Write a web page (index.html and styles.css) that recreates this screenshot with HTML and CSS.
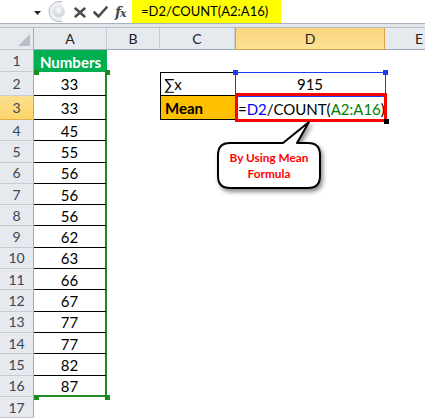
FILE: index.html
```html
<!DOCTYPE html>
<html>
<head>
<meta charset="utf-8">
<link rel="stylesheet" href="styles.css">
</head>
<body>
<div class="fbar">
  <div class="namebox">
    <svg class="dd" width="7" height="4" viewBox="0 0 7 4"><path d="M0 0H7L3.5 4Z" fill="#222"/></svg>
  </div>
  <div class="grip">
    <svg width="22" height="23" viewBox="0 0 22 23">
      <defs>
        <radialGradient id="g1" cx="0.45" cy="0.35" r="0.7">
          <stop offset="0" stop-color="#fafbfc"/>
          <stop offset="1" stop-color="#c9ced6"/>
        </radialGradient>
      </defs>
      <path d="M14 1.5 H11 A10 10 0 0 0 11 21.5 H14" fill="#eef0f3" stroke="#b3bac4" stroke-width="1"/>
      <circle cx="11" cy="11.5" r="5.5" fill="url(#g1)" stroke="#d0d5dc" stroke-width="0.6"/>
    </svg>
  </div>
  <div class="btns">
    <svg width="12" height="11" viewBox="0 0 12 11"><path d="M1.5 1.5L10.5 9.5M10.5 1.5L1.5 9.5" stroke="#4a4a4a" stroke-width="2.4" stroke-linecap="round"/></svg>
    <svg width="15" height="12" viewBox="0 0 15 12"><path d="M1.5 6.5L5.5 10.5L13.5 1.5" fill="none" stroke="#4a4a4a" stroke-width="2.6" stroke-linejoin="round" stroke-linecap="round"/></svg>
    <span class="fx">f<span class="x">x</span></span>
  </div>
  <div class="formula">=D2/COUNT(A2:A16)</div>
</div>
<div class="strip"></div>

<div class="sheet">
  <div class="row hdr">
    <div class="rh corner"><svg width="12" height="12" viewBox="0 0 12 12"><path d="M12 0V12H0Z" fill="#b9bfc8"/></svg></div>
    <div class="ch ca">A</div>
    <div class="ch cb">B</div>
    <div class="ch cc">C</div>
    <div class="ch cd sel">D</div>
    <div class="ch ce">E</div>
  </div>

  <div class="row r1">
    <div class="rh">1</div>
    <div class="ca acell top">Numbers</div>
  </div>
  <div class="row r2">
    <div class="rh">2</div>
    <div class="ca acell">33</div>
    <div class="cb"></div>
    <div class="cc tcell c2">&sum;x</div>
    <div class="cd dcell">915</div>
  </div>
  <div class="row r2">
    <div class="rh selrow">3</div>
    <div class="ca acell">33</div>
    <div class="cb"></div>
    <div class="cc tcell c3">Mean</div>
    <div class="cd dcell d3"><span class="k">=</span><span class="ref1">D2</span><span class="k">/COUNT(</span><span class="ref2">A2:A16</span><span class="k">)</span></div>
  </div>
  <div class="row rn"><div class="rh">4</div><div class="ca acell">45</div></div>
  <div class="row rn"><div class="rh">5</div><div class="ca acell">55</div></div>
  <div class="row rn"><div class="rh">6</div><div class="ca acell">56</div></div>
  <div class="row rn"><div class="rh">7</div><div class="ca acell">56</div></div>
  <div class="row rn"><div class="rh">8</div><div class="ca acell">56</div></div>
  <div class="row rn"><div class="rh">9</div><div class="ca acell">62</div></div>
  <div class="row rn"><div class="rh">10</div><div class="ca acell">63</div></div>
  <div class="row rn"><div class="rh">11</div><div class="ca acell">66</div></div>
  <div class="row rn"><div class="rh">12</div><div class="ca acell">67</div></div>
  <div class="row rn"><div class="rh">13</div><div class="ca acell">77</div></div>
  <div class="row rn"><div class="rh">14</div><div class="ca acell">77</div></div>
  <div class="row rn"><div class="rh">15</div><div class="ca acell">82</div></div>
  <div class="row rn"><div class="rh">16</div><div class="ca acell last">87</div></div>
  <div class="row rn"><div class="rh">17</div></div>

  <div class="bluebox"></div>
  <div class="hd blue hd-b1"></div>
  <div class="hd blue hd-b2"></div>
  <div class="redbox"></div>
  <div class="hd black hd-k"></div>
  <div class="hd green hd-g1"></div>
  <div class="hd green hd-g2"></div>
  <div class="hd green hd-g3"></div>
  <div class="hd green hd-g4"></div>

  <div class="callout">
    <svg width="120" height="80" viewBox="0 0 120 80">
      <path d="M15 22 L68 22 L94 1 L82 22 L93 22 Q105 22 105 34 L105 55 Q105 67 93 67 L15 67 Q3 67 3 55 L3 34 Q3 22 15 22 Z" fill="#fff" stroke="#000" stroke-width="2" stroke-linejoin="round"/>
    </svg>
    <div class="ctext">By Using Mean<br>Formula</div>
  </div>
</div>
</body>
</html>
```
FILE: styles.css
```css
* { box-sizing: border-box; }
html, body { margin: 0; padding: 0; background: #fff; }
body {
  width: 425px;
  height: 420px;
  overflow: hidden;
  font-family: Lato, "Liberation Sans", sans-serif;
  color: #000;
}

/* formula bar */
.fbar {
  display: flex;
  height: 24px;
  background: #fff;
  border-bottom: 1px solid #a7b2bf;
}
.namebox {
  width: 48px;
  display: flex;
  align-items: center;
  justify-content: flex-end;
  padding-right: 7px;
  padding-top: 2px;
}
.grip { width: 22px; display: flex; align-items: center; }
.btns {
  width: 62px;
  display: flex;
  align-items: center;
  gap: 7px;
  padding-left: 4px;
  padding-top: 1px;
}
.fx {
  font-family: "DejaVu Serif", "Liberation Serif", serif;
  font-style: italic;
  font-weight: bold;
  font-size: 14px;
  color: #4a4a4a;
  letter-spacing: -1px;
}
.fx .x { font-size: 11px; }
.formula {
  width: 149px;
  background: #ffff00;
  font-size: 13px;
  padding-left: 9px;
  line-height: 23px;
  white-space: nowrap;
}
.strip {
  height: 4px;
  background: #e3e7ec;
  border-bottom: 1px solid #b4bdc8;
}

/* sheet */
.sheet { position: relative; }
.row { display: flex; height: 21.3px; }
.row.hdr { height: 22px; }
.row.r1 { height: 22px; }
.row.r2 { height: 24px; }

.rh {
  width: 34px;
  flex: none;
  background: #e6e9ee;
  border-right: 1px solid #9eaabb;
  border-bottom: 1px solid #c5ccd6;
  color: #3b4656;
  font-size: 14px;
  display: flex;
  align-items: center;
  justify-content: center;
}
.rh.corner { align-items: flex-end; justify-content: flex-end; padding: 0 3px 3px 0; }
.rh.selrow {
  background: linear-gradient(#fde08d, #fbd56a);
  border-bottom-color: #e2b04a;
}
.ca { width: 73px; flex: none; }
.cb { width: 53px; flex: none; }
.cc { width: 75px; flex: none; }
.cd { width: 150px; flex: none; }
.ce { flex: 1; }

.ch {
  background: #e6e9ee;
  border-right: 1px solid #c5ccd6;
  border-bottom: 1px solid #9eaabb;
  font-size: 14px;
  color: #222;
  display: flex;
  align-items: center;
  justify-content: center;
}
.ch.sel {
  background: linear-gradient(#f8d47c, #fde495);
  border: 1px solid #d9a441;
  border-top: none;
}
.ch.ce { justify-content: flex-start; padding-left: 30px; border-right: none; }

.acell {
  display: flex;
  align-items: center;
  justify-content: center;
  font-size: 15px;
  border-bottom: 1px solid #000;
  border-right: 2px solid #1e8a1e;
  padding-top: 1px;
}
.acell.top {
  background: #00b050;
  color: #fff;
  font-weight: bold;
  border-bottom: none;
  border-right: none;
  width: 73px;
}
.acell.last { border-bottom: 2px solid #1e8a1e; }

.tcell {
  font-size: 15px;
  display: flex;
  align-items: center;
  padding-left: 3px;
  border-left: 1px solid #000;
  border-bottom: 1px solid #000;
}
.c2 { border-top: 1px solid #000; }
.c3 { background: #ffc000; font-weight: bold; padding-left: 4px; }
.dcell {
  font-size: 15px;
  display: flex;
  align-items: center;
  justify-content: center;
  white-space: nowrap;
}
.d3 { justify-content: flex-start; padding-left: 3px; padding-top: 1px; }
.ref1 { color: #0000ff; }
.ref2 { color: #008000; }

/* overlays */
.bluebox {
  position: absolute;
  left: 235px; top: 44px;
  width: 151px; height: 25px;
  border: 1px solid #1c3cf0;
}
.redbox {
  position: absolute;
  left: 235px; top: 65px;
  width: 152px; height: 29px;
  border: 3px solid #ff0000;
}
.hd { position: absolute; width: 5px; height: 5px; }
.hd.blue { background: #1c3cf0; }
.hd.black { background: #000; }
.hd.green { background: #1e8a1e; }
.hd-b1 { left: 233px; top: 42px; }
.hd-b2 { left: 383px; top: 42px; }
.hd-k { left: 384px; top: 91px; }
.hd-g1 { left: 34px; top: 42px; }
.hd-g2 { left: 105px; top: 42px; }
.hd-g3 { left: 34px; top: 367px; }
.hd-g4 { left: 105px; top: 367px; }

.callout {
  position: absolute;
  left: 215px; top: 93px;
  width: 120px; height: 80px;
}
.callout svg { filter: drop-shadow(2px 3px 2px rgba(0,0,0,0.45)); display: block; }
.ctext {
  position: absolute;
  left: 3px; top: 22px;
  width: 102px; height: 45px;
  display: flex;
  align-items: center;
  justify-content: center;
  text-align: center;
  color: #ff0000;
  font-weight: bold;
  font-size: 11.8px;
  line-height: 16px;
}
```
